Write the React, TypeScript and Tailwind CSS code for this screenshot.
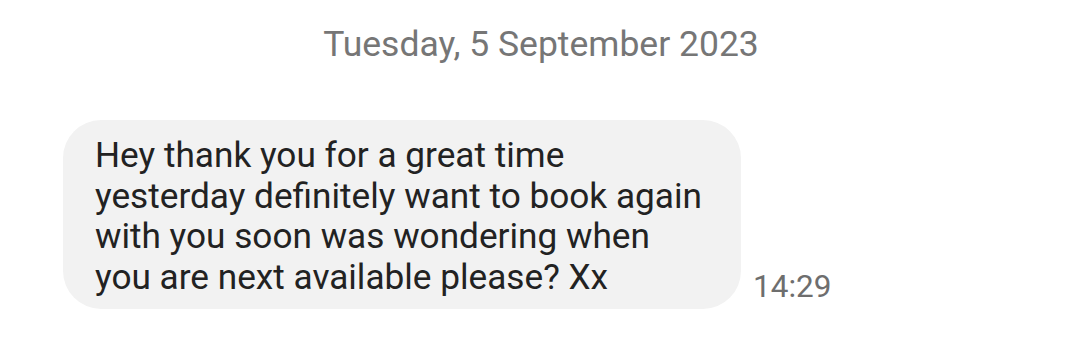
export default function App() {
  return (
    <div className="w-[1080px] h-[364px] bg-white overflow-hidden" style={{ fontFamily: 'Roboto, sans-serif' }}>
      <div className="pt-[22px] flex justify-center">
        <div className="text-[35.5px] leading-[44px] text-[#767676] ml-[2px]">Tuesday, 5 September 2023</div>
      </div>
      <div className="mt-[54px] flex items-end pl-[63px]">
        <div className="w-[678px] h-[189px] rounded-[38px] bg-[#f2f2f2] pl-[32px] pt-[15px] text-[35.2px] leading-[40.7px] text-[#222222]">
          Hey thank you for a great time<br />
          yesterday definitely want to book again<br />
          with you soon was wondering when<br />
          you are next available please? Xx
        </div>
        <div className="ml-[12px] mb-[2px] text-[31.5px] leading-[40px] text-[#6e6e6e]">14:29</div>
      </div>
    </div>
  );
}
